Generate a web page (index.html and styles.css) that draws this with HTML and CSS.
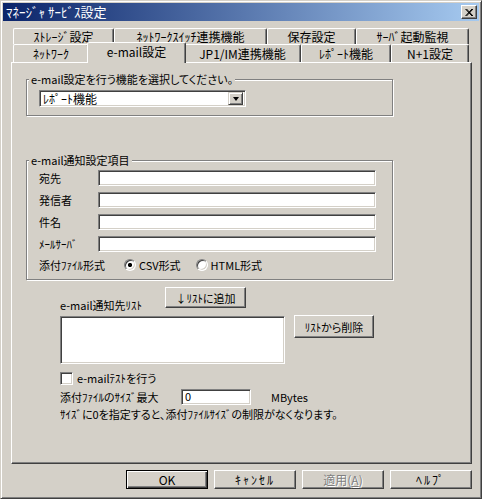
FILE: index.html
```html
<!DOCTYPE html>
<html lang="ja">
<head>
  <meta charset="UTF-8">
  <title>ﾏﾈｰｼﾞｬ ｻｰﾋﾞｽ設定</title>
  <link rel="stylesheet" href="styles.css">
</head>
<body>
  <div class="window">
    <div class="titlebar">
      <span class="title">ﾏﾈｰｼﾞｬ ｻｰﾋﾞｽ設定</span>
      <span class="close-btn">
        <svg width="8" height="7" viewBox="0 0 8 7"><path d="M0.5 0 L7 7 M1.5 0 L8 7 M7 0 L0.5 7 M8 0 L1.5 7" stroke="#000" stroke-width="1" fill="none"/></svg>
      </span>
    </div>

    <div class="client">
      <div class="tabs">
        <div class="tab-row row-back">
          <div class="tab t-storage">ｽﾄﾚｰｼﾞ設定</div>
          <div class="tab t-switch">ﾈｯﾄﾜｰｸｽｲｯﾁ連携機能</div>
          <div class="tab t-save">保存設定</div>
          <div class="tab t-boot">ｻｰﾊﾞ起動監視</div>
        </div>
        <div class="tab-row row-front">
          <div class="tab t-network">ﾈｯﾄﾜｰｸ</div>
          <div class="tab t-mail active">e-mail設定</div>
          <div class="tab t-jp1">JP1/IM連携機能</div>
          <div class="tab t-report">ﾚﾎﾟｰﾄ機能</div>
          <div class="tab t-n1">N+1設定</div>
        </div>
      </div>

      <div class="panel">
        <fieldset class="group group-func">
          <legend>e-mail設定を行う機能を選択してください。</legend>
          <div class="combo">
            <span class="combo-text">ﾚﾎﾟｰﾄ機能</span>
            <span class="combo-btn"><span class="arrow"></span></span>
          </div>
        </fieldset>

        <fieldset class="group group-notify">
          <legend>e-mail通知設定項目</legend>
          <div class="form-grid">
            <span class="lbl">宛先</span><div class="edit"></div>
            <span class="lbl">発信者</span><div class="edit"></div>
            <span class="lbl">件名</span><div class="edit"></div>
            <span class="lbl">ﾒｰﾙｻｰﾊﾞ</span><div class="edit"></div>
          </div>
          <div class="radio-row">
            <span class="radio-lbl">添付ﾌｧｲﾙ形式</span>
            <span class="radio checked"></span><span class="radio-text">CSV形式</span>
            <span class="radio"></span><span class="radio-text">HTML形式</span>
          </div>
        </fieldset>

        <div class="lower">
          <div class="add-row">
            <span class="list-lbl">e-mail通知先ﾘｽﾄ</span>
            <div class="btn btn-add">↓ﾘｽﾄに追加</div>
          </div>
          <div class="list-row">
            <div class="listbox"></div>
            <div class="btn btn-del">ﾘｽﾄから削除</div>
          </div>
          <div class="check-row">
            <span class="checkbox"></span>
            <span>e-mailﾃｽﾄを行う</span>
          </div>
          <div class="size-row">
            <span class="size-lbl">添付ﾌｧｲﾙのｻｲｽﾞ最大</span>
            <div class="edit edit-size">0</div>
            <span class="unit">MBytes</span>
          </div>
          <p class="note">ｻｲｽﾞに0を指定すると、添付ﾌｧｲﾙｻｲｽﾞの制限がなくなります。</p>
        </div>
      </div>

      <div class="buttons">
        <div class="btn btn-ok">OK</div>
        <div class="btn wide">ｷｬﾝｾﾙ</div>
        <div class="btn disabled">適用(<u>A</u>)</div>
        <div class="btn wide">ﾍﾙﾌﾟ</div>
      </div>
    </div>
  </div>
</body>
</html>
```

FILE: styles.css
```css
body {
  margin: 0;
  background: #fff;
  font-family: "Noto Sans CJK JP", "DejaVu Sans", sans-serif;
  font-size: 11px;
  line-height: 14px;
  font-feature-settings: "palt";
  color: #000;
}
.window {
  width: 482px;
  height: 499px;
  box-sizing: border-box;
  padding: 2px;
  background: #d4d0c8;
  border: 1px solid;
  border-color: #d4d0c8 #404040 #404040 #d4d0c8;
  box-shadow: inset 1px 1px 0 #fff, inset -1px -1px 0 #808080;
}
.titlebar {
  height: 18px;
  display: flex;
  align-items: center;
  justify-content: space-between;
  background: linear-gradient(to right, #0a246a, #a6caf0);
  color: #fff;
  font-size: 13px;
  padding: 0 2px 0 3px;
}
.close-btn {
  width: 16px;
  height: 14px;
  box-sizing: border-box;
  display: flex;
  align-items: center;
  justify-content: center;
  background: #d4d0c8;
  border: 1px solid;
  border-color: #fff #404040 #404040 #fff;
  box-shadow: inset -1px -1px 0 #808080;
}
.client {
  padding: 7px 6px 0 8px;
}

/* tabs */
.tabs {
  margin-left: 2px;
  font-size: 12px;
  font-feature-settings: normal;
}
.tab-row {
  display: flex;
}
.row-back {
  height: 16px;
}
.row-front {
  height: 18px;
  align-items: flex-end;
}
.tab {
  box-sizing: border-box;
  height: 100%;
  display: flex;
  align-items: center;
  justify-content: center;
  background: #d4d0c8;
  border-top: 1px solid #fff;
  border-left: 1px solid #fff;
  border-right: 1px solid #404040;
  border-radius: 2px 2px 0 0;
  box-shadow: inset -1px 0 0 #808080;
  white-space: nowrap;
}
.t-storage { width: 101px; }
.t-switch { width: 153px; }
.t-save { width: 89px; }
.t-boot { width: 113px; }
.t-network { width: 76px; }
.t-mail { width: 95px; }
.t-jp1 { width: 117px; }
.t-report { width: 90px; }
.t-n1 { width: 78px; }
.tab.active {
  position: relative;
  z-index: 2;
  width: 99px;
  height: 21px;
  margin: 0 -2px -1px;
  padding-bottom: 2px;
}

/* panel */
.panel {
  box-sizing: border-box;
  width: 461px;
  height: 402px;
  border: 1px solid;
  border-color: #fff #404040 #404040 #fff;
  box-shadow: inset -1px -1px 0 #808080;
  overflow: hidden;
}
.group {
  box-sizing: border-box;
  width: 367px;
  margin: 0 0 0 14px;
  border: 1px solid #808080;
  box-shadow: inset 1px 1px 0 #fff, 1px 1px 0 #fff;
  padding: 0 0 0 12px;
}
.group legend {
  padding: 0 2px;
  margin-left: -10px;
  background: #d4d0c8;
  line-height: 14px;
}
.group-func {
  margin-top: 9px;
  padding-top: 4px;
  padding-bottom: 8px;
}
.group-notify {
  margin-top: 37px;
  padding-top: 3px;
  padding-bottom: 6px;
}

.edit, .combo, .listbox, .checkbox, .radio {
  box-sizing: border-box;
  background: #fff;
  border: 1px solid;
  border-color: #808080 #fff #fff #808080;
  box-shadow: inset 1px 1px 0 #404040, inset -1px -1px 0 #d4d0c8;
}
.combo {
  width: 207px;
  height: 17px;
  display: flex;
  align-items: center;
  justify-content: space-between;
  padding: 2px;
  font-size: 12px;
}
.combo-text {
  padding-left: 1px;
}
.combo-btn {
  width: 15px;
  height: 13px;
  box-sizing: border-box;
  display: flex;
  align-items: center;
  justify-content: center;
  background: #d4d0c8;
  border: 1px solid;
  border-color: #d4d0c8 #404040 #404040 #d4d0c8;
  box-shadow: inset 1px 1px 0 #fff, inset -1px -1px 0 #808080;
}
.arrow {
  width: 0;
  height: 0;
  border-left: 3.5px solid transparent;
  border-right: 3.5px solid transparent;
  border-top: 4px solid #000;
}

.form-grid {
  display: grid;
  grid-template-columns: 59px 278px;
  row-gap: 6px;
  align-items: center;
}
.form-grid .edit {
  height: 16px;
}
.radio-row {
  display: flex;
  align-items: center;
  height: 16px;
  margin-top: 5px;
}
.radio-lbl {
  width: 85px;
}
.radio {
  width: 12px;
  height: 12px;
  border-radius: 50%;
  margin-right: 3px;
}
.radio.checked {
  background: radial-gradient(circle, #000 0, #000 1.8px, #fff 2.4px);
}
.radio-text {
  margin-right: 15px;
}

/* lower block */
.lower {
  margin: 7px 0 0 48px;
}
.add-row {
  display: flex;
  align-items: flex-start;
}
.list-lbl {
  width: 105px;
  margin-top: 11px;
}
.btn {
  box-sizing: border-box;
  display: flex;
  align-items: center;
  justify-content: center;
  background: #d4d0c8;
  border: 1px solid;
  border-color: #fff #404040 #404040 #fff;
  box-shadow: inset -1px -1px 0 #808080;
  white-space: nowrap;
}
.btn-add {
  width: 81px;
  height: 21px;
}
.list-row {
  display: flex;
  align-items: flex-start;
  margin-top: 4px;
}
.listbox {
  width: 225px;
  height: 48px;
}
.btn-del {
  width: 80px;
  height: 23px;
  margin: -1px 0 0 9px;
}
.check-row {
  display: flex;
  align-items: center;
  margin-top: 7px;
}
.checkbox {
  width: 13px;
  height: 13px;
  margin-right: 4px;
}
.size-row {
  display: flex;
  align-items: center;
  margin-top: 4px;
}
.size-lbl {
  width: 121px;
}
.edit-size {
  width: 70px;
  height: 16px;
  padding: 0 3px;
  line-height: 13px;
}
.unit {
  margin-left: 20px;
}
.note {
  margin: 2px 0 0;
}

/* dialog buttons */
.buttons {
  display: flex;
  justify-content: flex-end;
  gap: 6px;
  width: 461px;
  margin-top: 6px;
  font-size: 12px;
}
.buttons .btn {
  width: 82px;
  height: 19px;
}
.buttons .wide {
  letter-spacing: 2px;
}
.btn-ok {
  border: 1px solid #000;
  box-shadow: inset 1px 1px 0 #fff, inset -1px -1px 0 #404040, inset -2px -2px 0 #808080;
}
.btn.disabled {
  color: #808080;
  text-shadow: 1px 1px 0 #fff;
}
```
